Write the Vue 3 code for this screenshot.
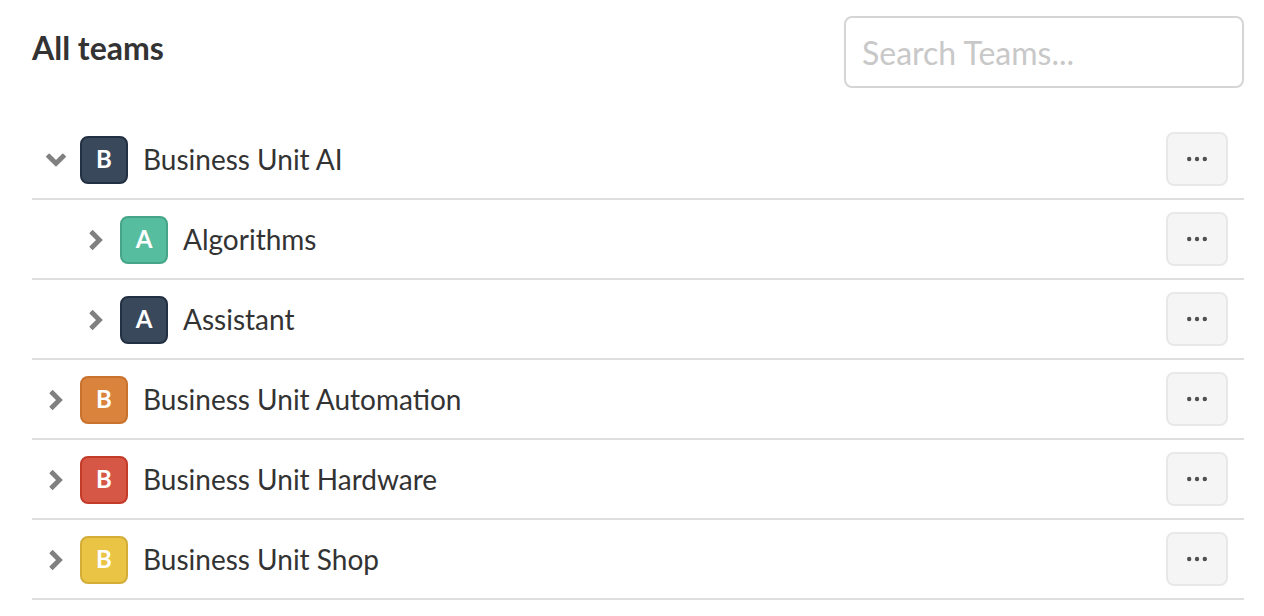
<script setup>
import { ref } from 'vue'

const query = ref('')
const teams = [
  { name: 'Business Unit AI', color: 'navy', level: 0, open: true },
  { name: 'Algorithms', color: 'green', level: 1, open: false },
  { name: 'Assistant', color: 'navy', level: 1, open: false },
  { name: 'Business Unit Automation', color: 'orange', level: 0, open: false },
  { name: 'Business Unit Hardware', color: 'red', level: 0, open: false },
  { name: 'Business Unit Shop', color: 'yellow', level: 0, open: false },
]
</script>

<template>
  <main class="page">
    <header class="head">
      <h1>All teams</h1>
      <input v-model="query" class="search" type="search" placeholder="Search Teams..." aria-label="Search teams" />
    </header>
    <ul class="list">
      <li v-for="team in teams" :key="team.name" class="row" :class="{ nested: team.level }">
        <button class="toggle" type="button" :aria-expanded="team.open" :aria-label="'Toggle ' + team.name">
          <svg :class="{ open: team.open }" viewBox="0 0 24 24" width="24" height="24" aria-hidden="true">
            <path d="M8.600 2.800L17.800 12L8.600 21.200L6.200 18.800L13 12L6.200 5.200Z" fill="#808080" stroke="#808080" stroke-width="1.500" stroke-linejoin="round" />
          </svg>
        </button>
        <span class="badge" :class="team.color">{{ team.name[0] }}</span>
        <span class="name">{{ team.name }}</span>
        <button class="more" type="button" :aria-label="'Actions for ' + team.name">
          <svg viewBox="0 0 24 8" width="24" height="8" aria-hidden="true">
            <circle cx="4.200" cy="4" r="2.200" /><circle cx="12" cy="4" r="2.200" /><circle cx="19.800" cy="4" r="2.200" />
          </svg>
        </button>
      </li>
    </ul>
  </main>
</template>

<style>
body {
  background: #fff;
}
</style>

<style scoped>
.page {
  padding: 16px 20px 16px 32px;
  font-family: Lato, "Liberation Sans", sans-serif;
  color: #333;
}
.head {
  display: flex;
  justify-content: space-between;
  align-items: flex-start;
  margin-bottom: 32px;
}
h1 {
  margin: 12px 0 0;
  font-size: 32px;
  line-height: 40px;
  font-weight: 700;
}
.search {
  box-sizing: border-box;
  width: 400px;
  height: 72px;
  padding: 0 16px;
  border: 2px solid #d5d5d5;
  border-radius: 8px;
  background: #fff;
  font: 32px/40px Lato, "Liberation Sans", sans-serif;
  color: #333;
  appearance: none;
}
.search::placeholder {
  color: #c8c8c8;
  opacity: 1;
}
.list {
  margin: 0;
  padding: 0;
  list-style: none;
}
.row {
  display: flex;
  align-items: center;
  box-sizing: border-box;
  height: 80px;
  padding: 2px 16px 0 12px;
  border-bottom: 2px solid #dedede;
}
.nested {
  padding-left: 52px;
}
.toggle {
  display: flex;
  width: 24px;
  height: 24px;
  margin-right: 12px;
  padding: 0;
  border: 0;
  background: none;
}
.open {
  transform: rotate(90deg);
}
.badge {
  box-sizing: border-box;
  width: 48px;
  height: 48px;
  margin-right: 15px;
  border: 2px solid;
  border-radius: 8px;
  font-size: 24px;
  line-height: 42px;
  font-weight: 700;
  text-align: center;
  color: #fff;
}
.navy { background: #39495b; border-color: #233043; }
.green { background: #57bd9f; border-color: #46a588; }
.orange { background: #d9833d; border-color: #c8722e; }
.red { background: #d75746; border-color: #c53b2a; }
.yellow { background: #eac445; border-color: #d2ad38; }
.name {
  flex: 1;
  padding-bottom: 2px;
  font-size: 28px;
  line-height: 36px;
}
.more {
  display: flex;
  align-items: center;
  justify-content: center;
  width: 62px;
  height: 54px;
  margin-bottom: 2px;
  padding: 0;
  border: 2px solid #e8e8e8;
  border-radius: 8px;
  background: #f5f5f5;
  fill: #505052;
}
</style>
